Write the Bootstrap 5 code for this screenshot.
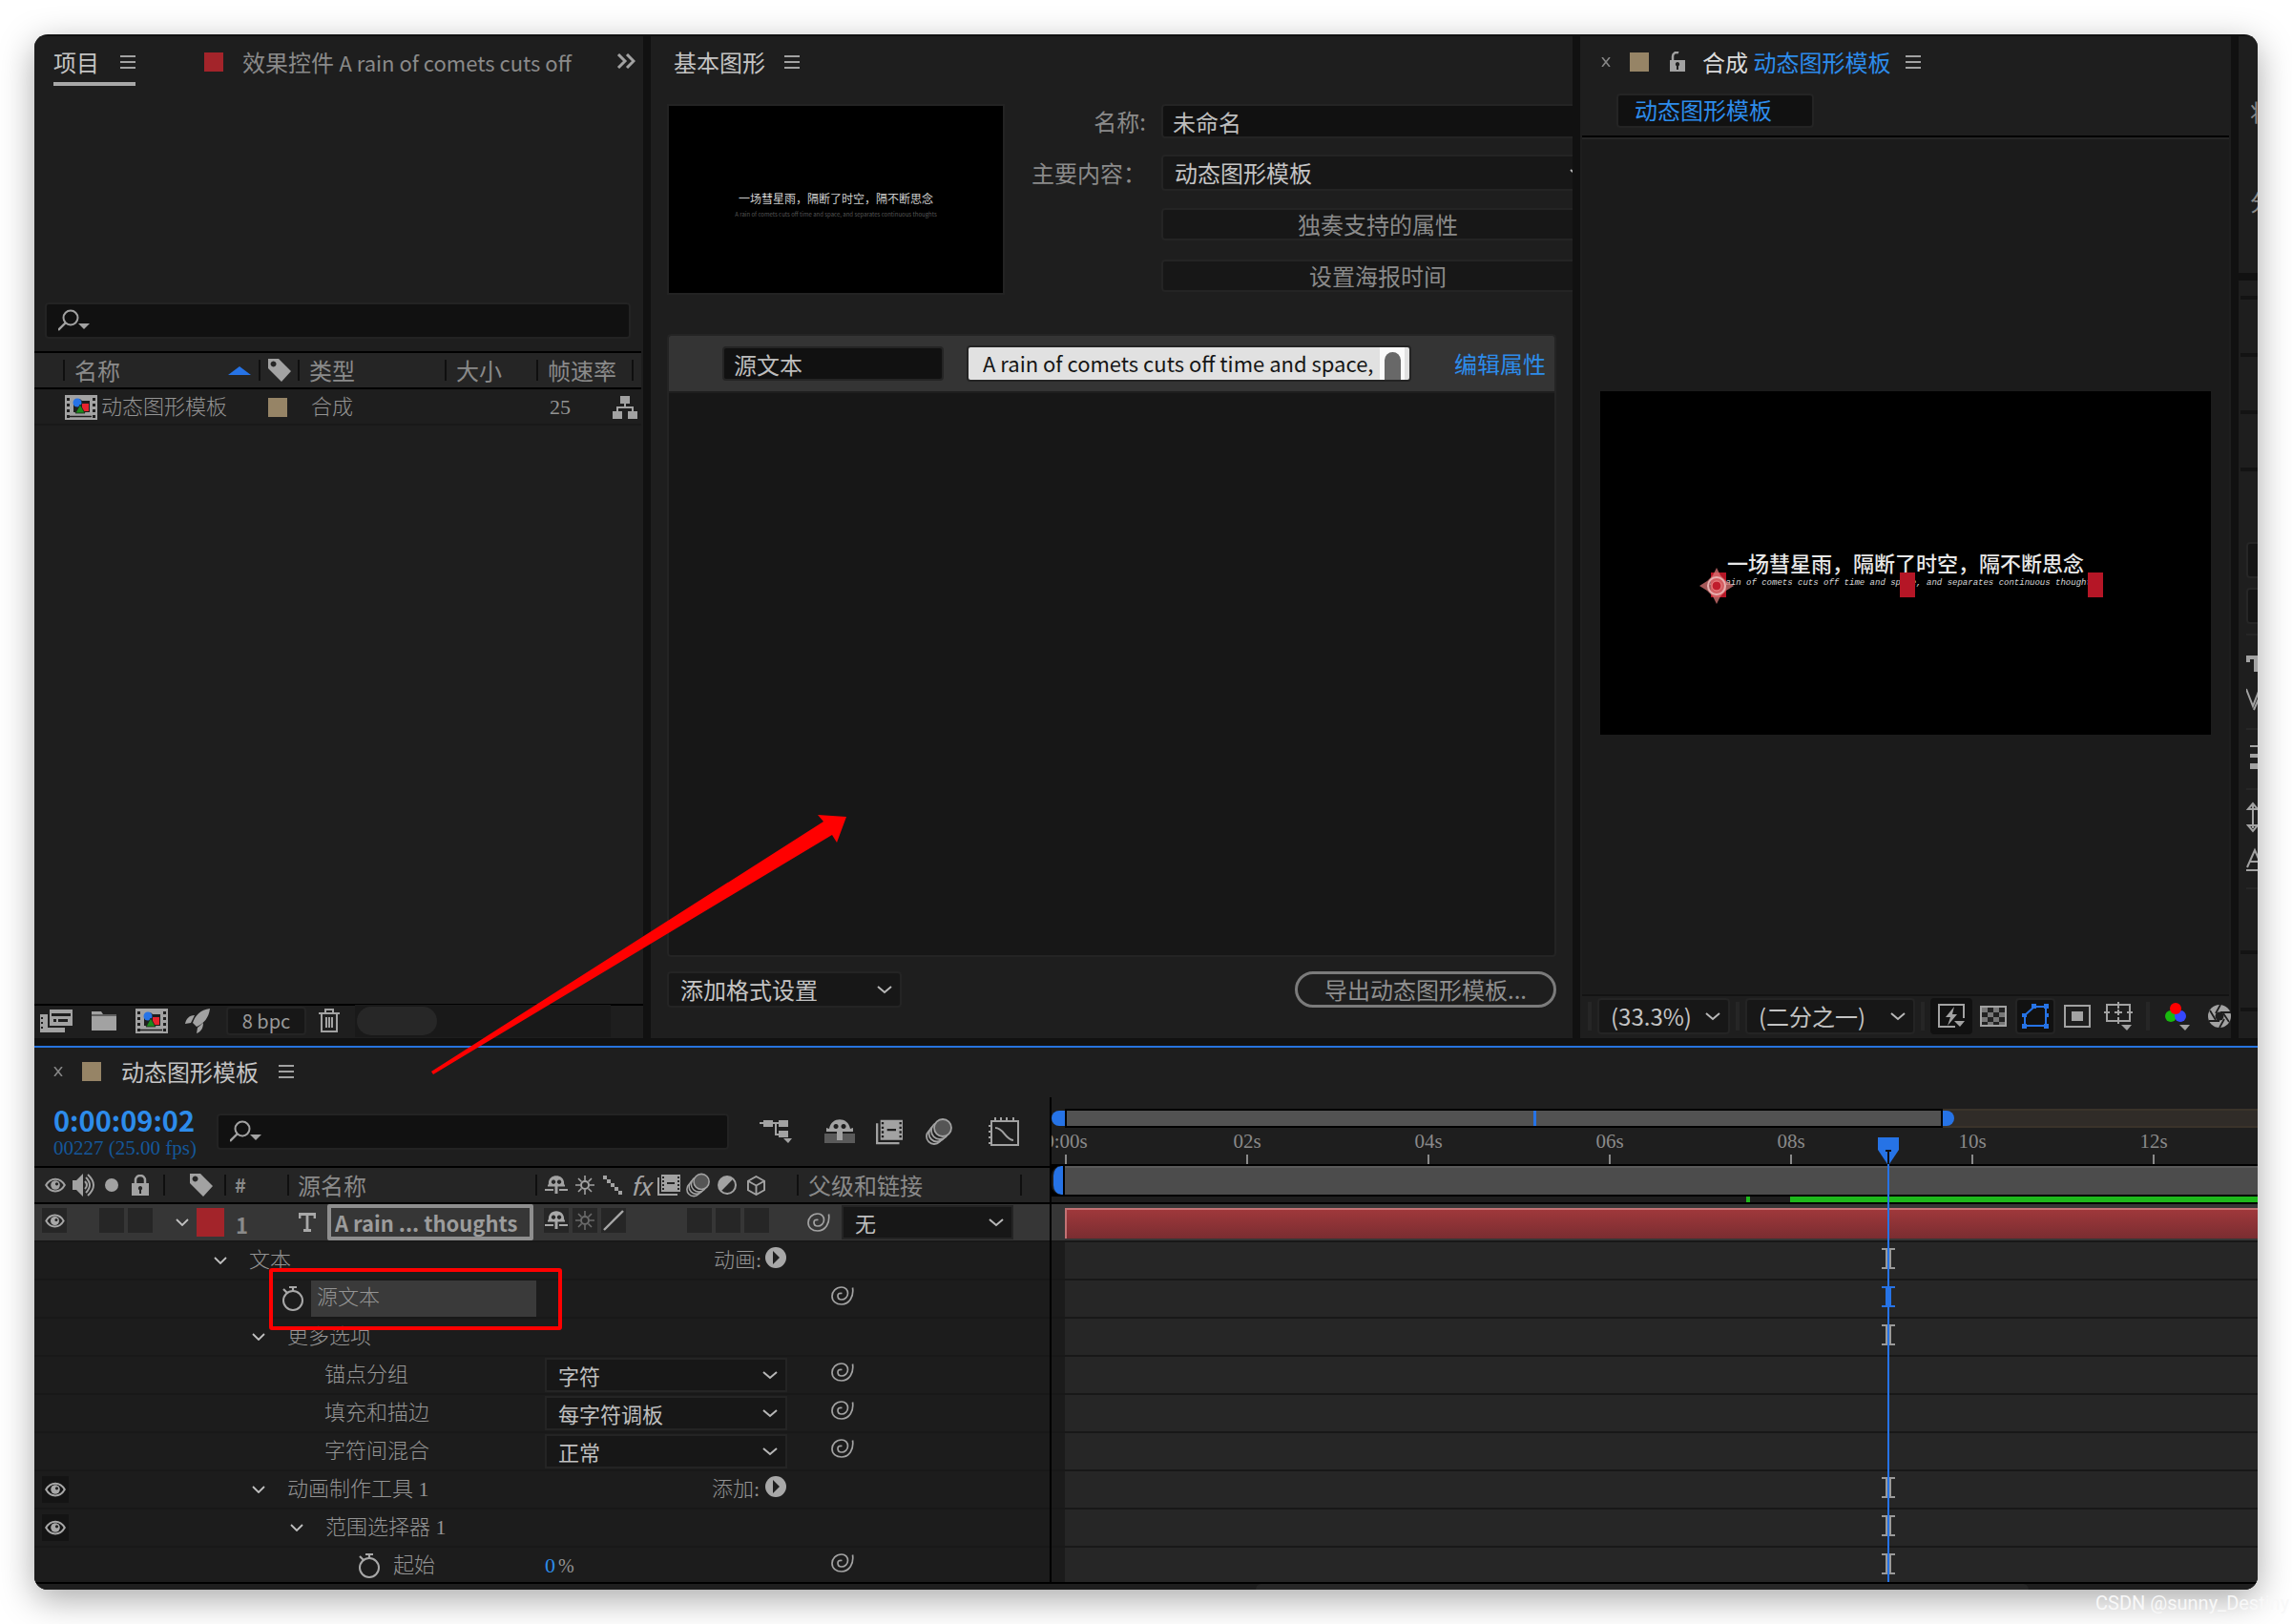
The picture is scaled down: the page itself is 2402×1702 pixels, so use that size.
<!DOCTYPE html>
<html lang="zh-CN">
<head>
<meta charset="utf-8">
<meta name="viewport" content="width=device-width, initial-scale=1">
<title>动态图形模板</title>
<link href="https://cdn.jsdelivr.net/npm/bootstrap@5.3.0/dist/css/bootstrap.min.css" rel="stylesheet">
<style>
:root{--ui:"Noto Sans CJK SC","Noto Sans",sans-serif;--thin:"Liberation Serif","Noto Sans CJK SC",serif;--blue:#2d8ceb;--ic:#a2a2a2}
body{background:#fff;font-family:var(--ui);font-size:24px;line-height:36px;color:#8a8a8a;padding:36px;height:100vh;overflow:hidden}
svg{display:block;flex:none}
.app{height:100%;background:#111;border-radius:14px;padding-top:2px;overflow:hidden;position:relative}
.shade{height:100%;border-radius:14px;box-shadow:0 10px 36px rgba(0,0,0,.34)}
.pane{background:#1e1e1e;min-width:0;overflow:hidden}
.p-proj{flex:638 1 0}.p-graph{flex:932 1 0;padding:0 17px}.p-comp{flex:682 1 0}.p-side{flex:0 0 20px}
.lat{font-size:22px}
.tabs{height:52px;padding-top:6px;flex:none;white-space:nowrap}
.tab-on{color:#c4c4c4;border-bottom:4px solid #a8a8a8;height:46px;gap:22px}
.title-txt{color:#c4c4c4}
.sw{width:20px;height:20px;flex:none}
.sw-red{background:#a3242a}.sw-tan{background:#968466}
.icb{background:none;border:0;padding:0;color:var(--ic);display:flex;flex:none}
.srch{height:38px;background:#111;border:2px solid #232323;border-radius:4px;color:var(--ic);padding-left:12px}
.srch input{background:none;border:0;outline:0;color:#ccc;flex:1;min-width:0;height:30px}
.fld{background:#111;border:2px solid #242424;border-radius:4px;color:#bdbdbd;height:36px;padding:0 10px;min-width:0;line-height:32px}
.sel{background-color:#171717;border:2px solid #242424;border-radius:4px;color:#c4c4c4;height:38px;line-height:32px;padding:0 36px 0 12px;font-size:24px;background-position:right 8px center;background-size:16px 16px;--bs-form-select-bg-img:url("data:image/svg+xml,%3csvg xmlns='http://www.w3.org/2000/svg' viewBox='0 0 16 16'%3e%3cpath fill='none' stroke='%23b8b8b8' stroke-width='2' d='m1 5 7 6 7-6'/%3e%3c/svg%3e")}
.flatbtn{background:#171717;border:2px solid #242424;border-radius:4px;color:#8a8a8a;height:34px;line-height:30px;padding:0}
.sep{background:linear-gradient(#0f0f0f,#0f0f0f) left center/2px 22px no-repeat}
/* project list */
.plist{table-layout:fixed;width:calc(100% - 2px);border-collapse:separate;border-spacing:0}
.plist th{height:40px;border-top:2px solid #000;border-bottom:2px solid #000;background-color:#252525;font-weight:400;padding:0 0 0 12px;white-space:nowrap}
.plist td{height:38px;padding:2px 0 0;border-bottom:2px solid #191919;font-family:var(--thin);font-weight:300;font-size:22px;line-height:34px;color:#949494;white-space:nowrap}
.pfoot{height:36px;border-top:2px solid #000;color:var(--ic);padding-bottom:3px}
.bpc{width:84px;height:30px;background:#171717;border:2px solid #242424;border-radius:4px;font-size:20px;line-height:26px;color:#9a9a9a;padding:0}
.scr-zone{flex:1;margin-right:34px;background:#191919;height:34px;padding-left:2px}
.pill{width:84px;height:30px;border-radius:15px;background:#272727}
/* graphics */
.thumb{width:354px;height:200px;background:#000;border:2px solid #232323;flex:none;color:#d0d0d0;font-size:12px;line-height:14px;padding-top:90px}
.thumb small{font-size:6px;line-height:8px;color:#555}
.f-lab{width:148px;text-align:right;flex:none;margin-right:16px}
.f-row{height:36px}
.proplist{border:2px solid #242424;background:#171717;border-radius:4px;overflow:hidden}
.prop-row{background:#343434;height:60px;padding-left:56px;border-bottom:2px solid #1e1e1e}
.txtarea{width:466px;height:38px;border:2px solid #242424;border-radius:4px;background:#e1e1e1;overflow:hidden}
.txtarea input{border:0;background:none;color:#161616;flex:1;min-width:0;padding:0 0 2px 15px;line-height:32px;font-size:22px}
.trk{width:26px;flex:none;background:#fafafa;height:34px;padding:5px 4px 0 5px;margin-right:5px}
.trk i{display:block;height:40px;border-radius:9px;background:#686868}
.export{border:3px solid #7b7b7b;border-radius:19px;height:38px;line-height:30px;width:274px;background:none;color:#8f8f8f;padding:0}
.lk{color:var(--blue);text-decoration:none}
/* composition */
.comp-tab{margin:8px 0 8px 38px;width:207px;height:36px;background:#111;border:2px solid #242424;border-radius:4px;padding:0 17px;line-height:30px}
.stage{background:#1b1b1b;border-top:2px solid #000;margin:0 2px;padding-bottom:6px;box-shadow:inset 0 2px #262626}
.view{width:640px;height:360px;background:#000;position:relative;flex:none}
.v-cap{position:absolute;left:0;right:0;top:47%;text-align:center;font-size:22px;line-height:20px;color:#e8e8e8;white-space:nowrap;font-family:"Noto Sans CJK SC",sans-serif;font-weight:500}
.v-sub{position:absolute;left:18%;top:54%;font:italic 9px/14px "Liberation Mono",monospace;color:#d8d8d8;white-space:nowrap}
.hnd{position:absolute;top:52.8%;width:16px;height:26px;background:#b51626}
.cfoot{height:46px;border-top:2px solid #131313;margin:0 2px;color:var(--ic);padding-bottom:2px}
.vbar{width:4px;height:30px;background:#262626;flex:none}
.tgl{background:#111;border:2px solid #111;border-radius:4px;height:38px;width:44px;justify-content:center;align-items:center}
/* side strip */
.side-t{padding-left:12px;white-space:nowrap;height:36px}
.strip-gap{height:8px;background:#111}
.ln{height:4px;background:#131313;margin-left:2px}
.ln2{height:2px;background:#262626;margin-left:8px}
.side-in{height:38px;width:60px;margin-left:8px;border:2px solid #262626;border-radius:4px;background:#151515}
/* timeline */
.tl{background:#1e1e1e;border-top:2px solid #2673dd;margin-top:8px;flex:none}
.tl-left{flex:0 0 1066px;border-right:2px solid #000}
.tc{color:var(--blue);font-size:29px;font-weight:700;line-height:34px}
.fps{color:#15579a;font:21px/26px "Liberation Serif",serif}
.th-row{height:40px;border-top:2px solid #000;border-bottom:2px solid #000;background:#252525;color:var(--ic)}
.th-row>div{height:36px;display:flex;align-items:center;color:#8a8a8a;flex:none}
.th-row svg{color:var(--ic)}
.c-av{width:135px}.c-lb{width:64px}.c-no{width:66px}.c-nm{width:260px}.c-swt{width:274px}.c-pr{width:234px}
.lay{height:38px;background:#363636}
.lay>div{display:flex;align-items:center;height:38px;flex:none}
.bx{width:26px;height:26px;background:#262626;display:flex;align-items:center;justify-content:center;flex:none;color:#a8a8a8}
.lname{width:216px;height:38px;border:4px solid #8e8e8e;color:#9c9c9c;font-weight:700;font-size:22px;line-height:30px;background:none;padding:0 0 0 4px;border-radius:2px}
.pr{height:40px;border-top:2px solid #181818;background:#1c1c1c;display:flex;position:relative;font-family:var(--thin);font-weight:300;font-size:22px;color:#949494}
.pr>div{display:flex;align-items:center;height:38px;flex:none}
.pr .sel,.lay .sel{height:36px;border-radius:0;font-size:22px;line-height:30px;font-family:var(--ui);color:#c0c0c0;font-weight:400}
.nm{width:535px}.i1{padding-left:188px}.i2{padding-left:228px}.i4{padding-left:304px}.i5{padding-left:340px}.i0{padding-left:260px}
.mid{width:254px}
.pr>.whip{padding:0 0 6px 46px}
.eyed{padding-left:8px}
.eyed .bx{background:#141414;width:28px;height:28px}
.hl{background:#3a3a3a;width:236px;height:38px;padding-left:6px}
.redbox{position:absolute;left:246px;top:-13px;width:307px;height:65px;border:4px solid #f00;border-radius:3px;z-index:3}
.pr:last-child{height:38px}
.tl-right{flex:1;min-width:0;padding-top:12px;position:relative;overflow:hidden}
.navb{height:20px}
.navb .cap{width:14px;height:16px;background:#2673e6;flex:none}
.navb .rest .cap{width:12px}
.navb .zone{width:920px;height:20px;background:#525252;border:2px solid #000;flex:none}
.navb .rest{flex:1;height:20px;background:#302c28;border:2px solid #3a332a;border-right:0;border-left:0}
.mk{width:3px;height:16px;background:#2673e6;margin-left:489px}
.ruler{height:38px;margin-left:-80px;font:21px/28px "Liberation Serif",serif;color:#8a8a8a}
.ruler span{flex:0 0 190px;text-align:center;height:38px;position:relative}
.ruler span::after{content:"";display:block;width:2px;height:10px;background:#8a8a8a;margin:0 auto}
.work{height:34px;background:#000;padding:2px 0}
.work .cap{width:14px;height:30px;background:#2673e6;border-left:2px solid #1e1e1e;border-right:2px solid #000;border-radius:10px 0 0 10px;flex:none}
.work .zone{flex:1;background:#4c4c4c;border-top:2px solid #5a5a5a}
.cache{height:8px;border-bottom:2px solid #000;padding-left:728px}
.cache i{background:#1eb81c;height:6px}
.bar-row{height:38px;background:#363636;padding:4px 0 2px 14px}
.lbar{height:32px;border-top:2px solid #c27274;border-left:2px solid #c27274;background:linear-gradient(#9f383b,#7a2d31)}
.tr{height:40px;border-top:2px solid #181818;background:linear-gradient(90deg,#1b1b1b 14px,#262626 14px)}
.tr svg{margin-left:870px;margin-top:6px;color:#9a9a9a}
.tr:last-child{height:38px}
.ph{position:absolute;left:866px;top:42px;z-index:2}
.phl{position:absolute;left:876px;top:70px;bottom:0;width:2px;background:#2673e6;z-index:2}
.tfoot{height:8px;border-top:2px solid #000;background:#1e1e1e}
.tfoot .scroll{margin-left:1280px;width:810px;height:6px;background:#272727;border-radius:8px 8px 0 0}
.arrow{position:absolute;left:410px;top:810px;z-index:4;pointer-events:none}
.wm{position:absolute;right:-24px;top:100%;color:#f8f8f8;font:20px/28px Roboto,sans-serif;width:194px;white-space:nowrap}
</style>
<script src="https://cdn.jsdelivr.net/npm/bootstrap@5.3.0/dist/js/bootstrap.bundle.min.js"></script>
</head>
<body>
<svg width="0" height="0" class="position-absolute">
<defs>
<symbol id="menu" viewBox="0 0 16 14"><path d="M0 1h16M0 7h16M0 13h16" stroke="currentColor" stroke-width="2"/></symbol>
<symbol id="find" viewBox="0 0 34 24"><circle cx="13" cy="9" r="7.5" fill="none" stroke="currentColor" stroke-width="2"/><path d="M8 14 0 22" stroke="currentColor" stroke-width="2.4"/><path d="M21 15h12l-6 6z" fill="currentColor"/></symbol>
<symbol id="tag" viewBox="0 0 24 24"><path fill="currentColor" fill-rule="evenodd" d="M0 0h11l13 13-10 11L0 10zM5.500 2.500a3 3 0 1 0 .1 0z"/></symbol>
<symbol id="clip" viewBox="0 0 34 26"><path fill="currentColor" fill-rule="evenodd" d="M0 0h34v26H0zM2 3v3h3V3zm0 6v3h3V9zm0 6v3h3v-3zm0 6v3h3v-3zM29 3v3h3V3zm0 6v3h3V9zm0 6v3h3v-3zm0 6v3h3v-3z"/><path d="M9 9a5 5 0 0 1 9-3h8v12H9z" fill="#1e1e1e"/><circle cx="13" cy="8" r="4.500" fill="#2673e6"/><path d="M18 9h7v8h-7z" fill="#e8232e"/><path d="m16 10 5 9H11z" fill="#1c8a1c" stroke="#1e1e1e" stroke-width=".8"/><path d="M5 22.500h23" stroke="#1e1e1e" stroke-width="1.500"/></symbol>
<symbol id="net" viewBox="0 0 26 24"><path fill="currentColor" d="M8 0h10v8H8zM0 16h10v8H0zM16 16h10v8H16z"/><path d="M13 8v5M5 17v-5h16v5" fill="none" stroke="currentColor" stroke-width="2"/></symbol>
<symbol id="eye" viewBox="0 0 22 16"><path fill="none" stroke="currentColor" stroke-width="2" d="M1.200 8C6-.5 16-.5 20.800 8 16 16.500 6 16.500 1.200 8z"/><circle cx="11" cy="8" r="4.800" fill="currentColor"/><circle cx="12.500" cy="6.800" r="1.600" fill="#222"/></symbol>
<symbol id="spk" viewBox="0 0 24 24"><path fill="currentColor" d="M0 7h4l7-7v24l-7-7H0z"/><path d="M13 8q4 4 0 8M14 4q8 8 0 16M16 1q12 11 0 22" fill="none" stroke="currentColor" stroke-width="2"/></symbol>
<symbol id="lock" viewBox="0 0 18 22"><path d="M4 10V6a5 5 0 0 1 10 0v4" fill="none" stroke="currentColor" stroke-width="2.500"/><path fill="currentColor" fill-rule="evenodd" d="M0 9h18v13H0zm9 3a2.300 2.300 0 0 0-1 4.300V20h2v-3.700A2.300 2.300 0 0 0 9 12z"/></symbol>
<symbol id="unlock" viewBox="0 0 18 22"><path d="M4 10V5a4 4 0 0 1 6-3.500" fill="none" stroke="currentColor" stroke-width="2.500"/><path fill="currentColor" fill-rule="evenodd" d="M1 9h16v12H1zm8 2a2.300 2.300 0 0 0-1 4.300V19h2v-3.700A2.300 2.300 0 0 0 9 11z"/></symbol>
<symbol id="shy" viewBox="0 0 24 20"><path fill="currentColor" fill-rule="evenodd" d="M4 10C2-3 22-3 20 10zM9 4.500a2.200 2.200 0 1 0 .1 0zm6 0a2.200 2.200 0 1 0 .1 0z"/><path d="M10.500 9h3v10h-3z" fill="currentColor"/><path d="M0 15h9M15 15h9M3 10.500h18" stroke="currentColor" stroke-width="2"/></symbol>
<symbol id="sun" viewBox="0 0 20 20"><circle cx="10" cy="10" r="4" fill="none" stroke="currentColor" stroke-width="2"/><path d="M10 0v5M10 15v5M0 10h5M15 10h5M3 3l3.500 3.500M13.500 13.500 17 17M17 3l-3.500 3.500M6.500 13.500 3 17" stroke="currentColor" stroke-width="1.600"/></symbol>
<symbol id="stair" viewBox="0 0 20 20"><path fill="currentColor" d="M0 0h4v4H0zM4 4h4v4H4zM8 8h4v4H8zM12 12h4v4h-4zM16 16h4v4h-4z"/></symbol>
<symbol id="film" viewBox="0 0 24 22"><path fill="currentColor" fill-rule="evenodd" d="M4 0h20v18H4zM5 2v2h2V2zm0 4v2h2V6zm0 4v2h2v-2zm0 4v2h2v-2zM21 2v2h2V2zm0 4v2h2V6zm0 4v2h2v-2zm0 4v2h2v-2zM10 8v2h8V8z"/><path d="M1 3v18h20" fill="none" stroke="currentColor" stroke-width="2"/></symbol>
<symbol id="mb" viewBox="0 0 28 28"><g stroke="currentColor" stroke-width="1.800"><circle cx="9" cy="19" r="8" fill="none"/><circle cx="12" cy="16" r="8.500" fill="#1e1e1e"/><circle cx="15" cy="13" r="9" fill="#1e1e1e"/><circle cx="18" cy="10" r="9" fill="#555"/></g></symbol>
<symbol id="half" viewBox="0 0 20 20"><circle cx="10" cy="10" r="9" fill="none" stroke="currentColor" stroke-width="2"/><path d="M16.400 3.600A9 9 0 0 0 3.600 16.400z" fill="currentColor"/></symbol>
<symbol id="cube" viewBox="0 0 20 22"><path d="m10 1 9 5v10l-9 5-9-5V6zM1 6l9 5 9-5M10 11v10" fill="none" stroke="currentColor" stroke-width="2"/></symbol>
<symbol id="whip" viewBox="0 0 24 20"><path d="M22.500 1.500C24 11 19 19 11 19 5 19 1 15.500 1 10.500S5 1 11 1c4 0 6.500 3 6.500 6.500S14.500 14 11 14c-3 0-4-2-4-4s1.500-3 4.500-2.500" fill="none" stroke="currentColor" stroke-width="1.700"/></symbol>
<symbol id="chev" viewBox="0 0 14 8"><path d="m1 1 6 6 6-6" fill="none" stroke="#c0c0c0" stroke-width="1.800"/></symbol>
<symbol id="watch" viewBox="0 0 22 26"><circle cx="11" cy="15" r="10" fill="none" stroke="currentColor" stroke-width="2"/><path d="M7 1h8M11 1v4M1 3l4 4" stroke="currentColor" stroke-width="2.200"/></symbol>
<symbol id="play" viewBox="0 0 22 22"><circle cx="11" cy="11" r="11" fill="currentColor"/><path d="m8 4 7 7-7 7z" fill="#1e1e1e"/></symbol>
<symbol id="beam" viewBox="0 0 14 22"><path d="M0 1h14M0 21h14M5 1v20M9 1v20" stroke="currentColor" stroke-width="2"/></symbol>
<symbol id="cross" viewBox="0 0 10 10"><path d="m1 0 8 10M9 0 1 10" stroke="#858585" stroke-width="1.600"/></symbol>
</defs>
</svg>

<div class="shade position-relative">
<main class="app d-flex flex-column">
  <div class="d-flex flex-grow-1 gap-2" style="min-height:0">

    <section class="pane p-proj d-flex flex-column">
      <div class="tabs d-flex">
        <div class="tab-on d-flex align-items-center" style="margin-left:20px"><span>项目</span><button class="icb" aria-label="面板菜单"><svg width="16" height="14"><use href="#menu"/></svg></button></div>
        <div class="d-flex align-items-center" style="margin-left:72px;height:42px"><span class="sw sw-red"></span><span style="margin-left:20px">效果控件 <span class="lat">A rain of comets cuts off</span></span></div>
        <button class="icb ms-auto align-items-center me-2" style="height:40px" aria-label="更多"><svg width="20" height="16" viewBox="0 0 20 16"><path d="m2 1 7 7-7 7M11 1l7 7-7 7" fill="none" stroke="currentColor" stroke-width="3"/></svg></button>
      </div>
      <label class="srch d-flex align-items-center" style="margin:227px 13px 13px 11px"><svg width="34" height="24"><use href="#find"/></svg><input type="text" aria-label="搜索项目"></label>
      <table class="plist">
        <colgroup><col style="width:30px"><col><col style="width:41px"><col style="width:154px"><col style="width:96px"><col style="width:100px"><col style="width:10px"></colgroup>
        <thead><tr><th></th><th class="sep"><span class="d-flex align-items-center justify-content-between pe-2">名称<svg width="24" height="9" viewBox="0 0 24 9"><path d="M12 0 24 9H0z" fill="#2673e6"/></svg></span></th><th class="sep" style="padding-left:10px"><svg width="24" height="24" color="#a2a2a2"><use href="#tag"/></svg></th><th class="sep">类型</th><th class="sep">大小</th><th class="sep">帧速率</th><th class="sep"></th></tr></thead>
        <tbody><tr><td></td><td><span class="d-flex align-items-center gap-1"><svg width="34" height="26" color="#a2a2a2" style="margin-left:2px"><use href="#clip"/></svg>动态图形模板</span></td><td><span class="sw sw-tan d-block" style="margin-left:10px"></span></td><td style="padding-left:14px">合成</td><td></td><td colspan="2"><span class="d-flex justify-content-between align-items-center pe-1" style="padding-left:14px">25<svg width="26" height="24" color="#a2a2a2"><use href="#net"/></svg></span></td></tr></tbody>
      </table>
      <div class="flex-grow-1"></div>
      <div class="pfoot d-flex align-items-center" style="padding-left:6px">
        <button class="icb" aria-label="解释素材"><svg width="34" height="24" viewBox="0 0 34 24"><path fill="currentColor" fill-rule="evenodd" d="M10 0h24v17H10zM12 4v3h20V4zm2 6v3h3v-3zm5 0v3h10v-3z"/><path fill="currentColor" fill-rule="evenodd" d="M0 5h8v14h18v5H0zm1 3v2h2V8zm0 5v2h2v-2zm0 5v2h2v-2z"/></svg></button>
        <button class="icb" style="margin-left:20px" aria-label="新建文件夹"><svg width="26" height="20" viewBox="0 0 26 20"><path fill="currentColor" d="M0 0h10l2 3h14v17H0z"/><path d="M0 4h26" stroke="#1e1e1e"/></svg></button>
        <button class="icb" style="margin-left:20px" aria-label="新建合成"><svg width="34" height="26"><use href="#clip"/></svg></button>
        <button class="icb" style="margin-left:18px" aria-label="项目设置"><svg width="26" height="26" viewBox="0 0 26 26"><path fill="currentColor" d="M26 0C16 1 10 8 8 15l4 4C19 16 25 10 26 0zM10 7C4 7 1 11 0 16l6-1zM19 15l-6 5-1 6c5-2 7-6 7-11z"/></svg></button>
        <button class="bpc" style="margin-left:17px">8 bpc</button>
        <button class="icb" style="margin:0 16px 0 13px" aria-label="删除"><svg width="22" height="26" viewBox="0 0 22 26"><path d="M0 5h22M7 5V1h8v4M3 5v19h16V5M8 9v11M11 9v11M14 9v11" fill="none" stroke="currentColor" stroke-width="2"/></svg></button>
        <div class="scr-zone d-flex align-items-center"><div class="pill"></div></div>
      </div>
    </section>

    <section class="pane p-graph d-flex flex-column">
      <div class="tabs d-flex align-items-center pb-1" style="gap:20px;padding-left:7px"><span class="title-txt">基本图形</span><button class="icb" aria-label="面板菜单"><svg width="16" height="14"><use href="#menu"/></svg></button></div>
      <div class="d-flex" style="margin-top:19px">
        <div class="thumb text-center">一场彗星雨，隔断了时空，隔不断思念<br><small>A rain of comets cuts off time and space, and separates continuous thoughts</small></div>
        <div class="flex-grow-1 d-flex flex-column" style="gap:18px;margin-right:-40px">
          <div class="f-row d-flex align-items-center"><label class="f-lab" for="nm">名称:</label><input id="nm" class="fld flex-grow-1" value="未命名"></div>
          <div class="f-row d-flex align-items-center"><label class="f-lab" for="mc">主要内容：</label><select id="mc" class="form-select sel flex-grow-1"><option>动态图形模板</option></select></div>
          <div class="f-row d-flex align-items-center"><span class="f-lab"></span><button class="flatbtn flex-grow-1">独奏支持的属性</button></div>
          <div class="f-row d-flex align-items-center"><span class="f-lab"></span><button class="flatbtn flex-grow-1">设置海报时间</button></div>
        </div>
      </div>
      <div class="proplist flex-grow-1" style="margin-top:41px">
        <div class="prop-row d-flex align-items-center"><input class="fld" style="width:232px" value="源文本" aria-label="属性名称">
          <div class="txtarea d-flex" style="margin-left:24px"><input value="A rain of comets cuts off time and space," aria-label="源文本内容"><span class="trk"><i></i></span></div>
          <a class="lk ms-auto" href="#" style="margin-right:9px">编辑属性</a></div>
      </div>
      <div class="d-flex justify-content-between" style="margin:15px 0 32px"><select class="form-select sel" style="width:246px" aria-label="格式设置"><option>添加格式设置</option></select><button class="export">导出动态图形模板...</button></div>
    </section>

    <section class="pane p-comp d-flex flex-column">
      <div class="tabs d-flex align-items-center pb-1" style="padding-left:22px"><svg width="10" height="10"><use href="#cross"/></svg><span class="sw sw-tan" style="margin:0 21px 0 20px"></span><svg width="18" height="22" color="#a2a2a2" style="margin-right:17px"><use href="#unlock"/></svg><span style="color:#dcdcdc">合成</span>&nbsp;<span class="lk">动态图形模板</span><button class="icb" style="margin-left:16px" aria-label="面板菜单"><svg width="16" height="14"><use href="#menu"/></svg></button></div>
      <div class="comp-tab"><a class="lk" href="#">动态图形模板</a></div>
      <div class="stage flex-grow-1 d-flex align-items-center justify-content-center">
        <div class="view"><div class="v-cap">一场彗星雨，隔断了时空，隔不断思念</div><div class="v-sub">A rain of comets cuts off time and space, and separates continuous thoughts</div>
          <span class="hnd" style="left:18.200%"></span><span class="hnd" style="left:49%"></span><span class="hnd" style="left:79.800%"></span>
          <svg class="position-absolute" style="left:16.200%;top:51.300%" width="36" height="38" viewBox="0 0 36 38"><path d="m18 0 4 8 6 6 8 5-8 5-6 6-4 8-4-8-6-6-8-5 8-5 6-6z" fill="#d77" opacity=".75"/><circle cx="18" cy="19" r="9" fill="none" stroke="#e8b0b0" stroke-width="2"/><circle cx="18" cy="19" r="5" fill="#c01c2c" stroke="#e88" stroke-width="1"/></svg>
        </div>
      </div>
      <div class="cfoot d-flex align-items-center">
        <span class="vbar" style="margin:0 6px"></span><select class="form-select sel lat" style="width:139px;flex:none" aria-label="缩放"><option>(33.3%)</option></select>
        <span class="vbar" style="margin:0 6px"></span><select class="form-select sel" style="width:178px;flex:none" aria-label="分辨率"><option>(二分之一)</option></select>
        <span class="vbar" style="margin:0 6px"></span>
        <button class="icb tgl" aria-label="快速预览"><svg width="28" height="26" viewBox="0 0 28 26"><path d="M18 24H1V1h26v14" fill="none" stroke="currentColor" stroke-width="2"/><path fill="currentColor" d="M17 3 8 14h5l-3 9 10-12h-5zM17 18h11l-5 6z"/></svg></button>
        <button class="icb" style="margin:0 9px 0 8px" aria-label="透明网格"><svg width="28" height="22" viewBox="0 0 28 22"><path d="M1 1h26v20H1z" fill="#222" stroke="currentColor" stroke-width="2"/><path fill="#777" d="M2 2h6v5H2zM14 2h6v5h-6zM8 7h6v5H8zM20 7h6v5h-6zM2 12h6v5H2zM14 12h6v5h-6zM8 17h6v3H8zM20 17h6v3h-6z"/></svg></button>
        <button class="icb tgl" style="width:42px;border-color:#242424;color:#2673e6" aria-label="蒙版路径"><svg width="28" height="26" viewBox="0 0 28 26"><path d="M3 23V12L13 3h12v20z" fill="none" stroke="currentColor" stroke-width="2"/><path fill="currentColor" d="M0 21h5v5H0zM23 21h5v5h-5zM23 0h5v5h-5zM10 0h5v5h-5zM0 10h5v4H0zM24 10h4v4h-4z"/></svg></button>
        <button class="icb" style="margin:0 14px 0 9px" aria-label="感兴趣区域"><svg width="28" height="24" viewBox="0 0 28 24"><path d="M1 1h26v22H1z" fill="none" stroke="currentColor" stroke-width="2"/><path fill="currentColor" d="M8 7h12v10H8z"/></svg></button>
        <button class="icb" aria-label="网格和参考线"><svg width="30" height="30" viewBox="0 0 30 30"><path d="M3 3h24v17H3z" fill="none" stroke="currentColor" stroke-width="2"/><path d="M15 0v7M15 16v7M0 11h6M24 11h6M11 11h8M15 8v6" stroke="currentColor" stroke-width="2"/><path fill="currentColor" d="M18 24h11l-5 6z"/></svg></button>
        <span class="vbar" style="margin:0 16px 0 14px"></span>
        <button class="icb" aria-label="显示通道"><svg width="28" height="30" viewBox="0 0 28 30"><circle cx="6" cy="15" r="6" fill="#19b80e"/><circle cx="16" cy="15" r="6" fill="#3548ff"/><circle cx="11" cy="7" r="6" fill="#f00"/><path fill="currentColor" d="M15 24h11l-5 6z"/></svg></button>
        <button class="icb" style="margin-left:17px" aria-label="曝光度"><svg width="24" height="24" viewBox="0 0 24 24"><circle cx="12" cy="12" r="12" fill="currentColor"/><path d="m13 0-5 9M24 8H13M22 18l-6-9M12 24l5-9M1 17h11M2 6l6 10" stroke="#1e1e1e" stroke-width="1.800"/><circle cx="12" cy="12" r="4.500" fill="#1e1e1e"/></svg></button>
      </div>
    </section>

    <section class="pane p-side">
      <div class="side-t" style="margin-top:61px">将图层对齐到:</div>
      <div class="side-t" style="margin:58px 0">分布图层:</div>
      <div class="strip-gap" style="margin-top:-1px"></div>
      <div class="ln" style="margin-top:16px"></div><div class="ln" style="margin-top:56px"></div><div class="ln" style="margin-top:56px"></div><div class="ln" style="margin-top:56px"></div>
      <div class="side-in" style="margin-top:74px"></div><div class="side-in" style="margin-top:10px"></div>
      <div class="ln2" style="margin-top:10px"></div>
      <svg width="40" height="262" viewBox="0 0 40 262" color="#a2a2a2" style="margin-left:8px"><g stroke="currentColor" fill="none" stroke-width="2"><path d="M0 23h20M2 22v6M10 23v15" stroke-width="4"/><path d="M0 56l7 18 7-18M8 78 20 50"/><path d="M4 116h30" /><path d="M4 126h30" stroke-width="4"/><path d="M4 137h30" stroke-width="6"/><path d="M7 178v24M2 182l5-6 5 6zM2 199l5 6 5-6z"/><path d="m1 243 8-18 8 18M4 237h10M0 246h24"/></g><path d="M0 98h40M0 161h40" stroke="#262626" stroke-width="2"/></svg>
      <div class="ln2" style="margin-top:2px"></div><div class="ln" style="margin-top:64px"></div><div class="ln" style="margin-top:56px"></div>
    </section>
  </div>

  <section class="tl">
    <div class="d-flex align-items-center" style="height:52px;padding:0 0 2px 20px"><svg width="10" height="10"><use href="#cross"/></svg><span class="sw sw-tan" style="margin:0 21px 0 20px"></span><span class="title-txt">动态图形模板</span><button class="icb" style="margin-left:21px" aria-label="面板菜单"><svg width="16" height="14"><use href="#menu"/></svg></button></div>
    <div class="d-flex">
      <div class="tl-left">
        <div class="d-flex align-items-center" style="height:72px;padding:0 32px 0 20px;color:#a2a2a2">
          <div style="width:171px;white-space:nowrap"><div class="tc">0:00:09:02</div><div class="fps">00227 (25.00 fps)</div></div>
          <label class="srch d-flex align-items-center" style="width:537px"><svg width="34" height="24"><use href="#find"/></svg><input type="text" aria-label="搜索图层"></label>
          <button class="icb" style="margin-left:32px" aria-label="合成微型流程图"><svg width="34" height="26" viewBox="0 0 34 26"><path fill="currentColor" d="M4 1h10v7H4zM20 1h10v7H20zM20 12h10v7H20zM25 20h9l-4 5z"/><path d="M0 4h22M17 4v12h5" fill="none" stroke="currentColor" stroke-width="2"/></svg></button>
          <button class="icb" style="margin-left:34px" aria-label="隐藏图层"><svg width="32" height="26" viewBox="0 0 32 26"><path d="M0 15h32v10H0z" fill="#5a5a5a"/><path fill="currentColor" fill-rule="evenodd" d="M2 13V9l3 1C7-3 25-3 27 10l3-1v4zM12 5a2.500 2.500 0 1 0 .1 0zm8 0a2.500 2.500 0 1 0 .1 0z"/><path fill="currentColor" d="M13 11h6v11h-6z"/></svg></button>
          <button class="icb" style="margin-left:22px" aria-label="帧混合"><svg width="28" height="27"><use href="#film"/></svg></button>
          <button class="icb" style="margin-left:24px" aria-label="运动模糊"><svg width="28" height="28"><use href="#mb"/></svg></button>
          <button class="icb ms-auto" aria-label="图表编辑器"><svg width="32" height="30" viewBox="0 0 32 30"><path d="M3 4h28v25H3zM7 0v4M13 0v4M19 0v4M26 0v4M0 9h3M0 15h3M0 21h3M0 27h3" fill="none" stroke="currentColor" stroke-width="2"/><path d="M7 11c9 0 10 12 19 13" fill="none" stroke="currentColor" stroke-width="2"/></svg></button>
        </div>
        <div class="th-row d-flex">
          <div class="c-av" style="padding-left:11px"><svg width="22" height="16"><use href="#eye"/></svg><svg width="24" height="24" style="margin-left:7px"><use href="#spk"/></svg><svg width="14" height="14" style="margin:0 14px 0 10px"><circle cx="7" cy="7" r="7" fill="currentColor"/></svg><svg width="18" height="22"><use href="#lock"/></svg></div>
          <div class="c-lb sep" style="padding-left:28px"><svg width="24" height="24"><use href="#tag"/></svg></div>
          <div class="c-no sep" style="padding-left:11px;font-size:20px;font-weight:700">#</div>
          <div class="c-nm sep" style="padding-left:11px">源名称</div>
          <div class="c-swt sep" style="padding-left:10px"><svg width="24" height="20"><use href="#shy"/></svg><svg width="20" height="20" class="ms-2"><use href="#sun"/></svg><svg width="20" height="20" style="margin:0 9px"><use href="#stair"/></svg><i style="color:#a2a2a2;font:italic 26px/30px 'Noto Sans CJK SC',sans-serif;width:24px">fx</i><svg width="24" height="22" style="margin:0 6px 0 4px"><use href="#film"/></svg><svg width="25" height="26"><use href="#mb"/></svg><svg width="20" height="20" style="margin:0 11px 0 8px"><use href="#half"/></svg><svg width="19" height="21"><use href="#cube"/></svg></div>
          <div class="c-pr sep" style="padding-left:12px">父级和链接</div><div class="sep" style="width:30px"></div>
        </div>
        <div class="lay d-flex">
          <div class="c-av" style="padding:0 11px 4px 8px"><span class="bx"><svg width="21" height="15"><use href="#eye"/></svg></span><span class="bx ms-auto"></span><span class="bx ms-1"></span></div>
          <div class="c-lb" style="padding-left:13px"><svg width="14" height="8"><use href="#chev"/></svg><span class="sw-red" style="width:30px;height:30px;margin-left:8px"></span></div>
          <div class="c-no" style="padding:4px 0 0 12px;font-weight:700;font-size:22px">1</div>
          <div style="width:269px"><svg width="18" height="20" viewBox="0 0 18 20" style="margin:0 12px 0 12px"><path d="M1 6V1.500h16V6M9 1v17M5 18.500h8" fill="none" stroke="#a8a8a8" stroke-width="2.800"/></svg><input class="lname" value="A rain ... thoughts" aria-label="图层名称"></div>
          <div class="gap-1" style="width:276px;padding-bottom:4px"><span class="bx"><svg width="24" height="20"><use href="#shy"/></svg></span><span class="bx" style="color:#6a6a6a"><svg width="20" height="20"><use href="#sun"/></svg></span><span class="bx"><svg width="24" height="24" viewBox="0 0 24 24"><path d="M2 22 22 2" stroke="currentColor" stroke-width="2.400"/></svg></span><span style="width:56px"></span><span class="bx"></span><span class="bx"></span><span class="bx"></span></div>
          <div><svg width="24" height="20" color="#a2a2a2" style="margin-right:12px"><use href="#whip"/></svg><select class="form-select sel" style="width:180px" aria-label="父级"><option>无</option></select></div>
        </div>
        <div class="pr"><div class="nm i1"><svg width="14" height="8"><use href="#chev"/></svg><span style="margin-left:23px">文本</span></div><div class="mid justify-content-end">动画:<svg width="22" height="22" color="#a8a8a8" style="margin:0 1px 6px 4px"><use href="#play"/></svg></div></div>
        <div class="pr"><div class="nm i0"><svg width="22" height="26" color="#a8a8a8" style="margin-right:8px"><use href="#watch"/></svg><span class="hl">源文本</span></div><div class="mid"></div><div class="whip"><svg width="24" height="20" color="#a2a2a2"><use href="#whip"/></svg></div><span class="redbox"></span></div>
        <div class="pr"><div class="nm i2"><svg width="14" height="8"><use href="#chev"/></svg><span style="margin-left:23px">更多选项</span></div></div>
        <div class="pr"><div class="nm i4"><label for="s1">锚点分组</label></div><div class="mid"><select id="s1" class="form-select sel"><option>字符</option></select></div><div class="whip"><svg width="24" height="20" color="#a2a2a2"><use href="#whip"/></svg></div></div>
        <div class="pr"><div class="nm i4"><label for="s2">填充和描边</label></div><div class="mid"><select id="s2" class="form-select sel"><option>每字符调板</option></select></div><div class="whip"><svg width="24" height="20" color="#a2a2a2"><use href="#whip"/></svg></div></div>
        <div class="pr"><div class="nm i4"><label for="s3">字符间混合</label></div><div class="mid"><select id="s3" class="form-select sel"><option>正常</option></select></div><div class="whip"><svg width="24" height="20" color="#a2a2a2"><use href="#whip"/></svg></div></div>
        <div class="pr"><div class="nm eyed"><span class="bx"><svg width="22" height="16"><use href="#eye"/></svg></span><svg width="14" height="8" style="margin-left:192px"><use href="#chev"/></svg><span style="margin-left:23px">动画制作工具 1</span></div><div class="mid justify-content-end">添加:<svg width="22" height="22" color="#a8a8a8" style="margin:0 1px 6px 6px"><use href="#play"/></svg></div></div>
        <div class="pr"><div class="nm eyed"><span class="bx"><svg width="22" height="16"><use href="#eye"/></svg></span><svg width="14" height="8" style="margin-left:232px"><use href="#chev"/></svg><span style="margin-left:23px">范围选择器 1</span></div></div>
        <div class="pr"><div class="nm i5"><svg width="22" height="26" color="#a8a8a8" style="margin-right:14px"><use href="#watch"/></svg>起始</div><div class="mid"><span class="lk">0</span><span style="margin-left:3px;font-size:20px">%</span></div><div class="whip"><svg width="24" height="20" color="#a2a2a2"><use href="#whip"/></svg></div></div>
      </div>

      <div class="tl-right">
        <div class="navb d-flex align-items-center"><span class="cap" style="border-radius:10px 0 0 10px"></span><div class="zone"><div class="mk"></div></div><div class="rest d-flex"><span class="cap" style="border-radius:0 10px 10px 0"></span></div></div>
        <div class="ruler d-flex"><span>0:00s</span><span>02s</span><span>04s</span><span>06s</span><span>08s</span><span>10s</span><span>12s</span></div>
        <div class="work d-flex"><span class="cap"></span><div class="zone"></div></div>
        <div class="cache d-flex"><i style="width:4px"></i><i class="flex-grow-1" style="margin-left:42px"></i></div>
        <div class="bar-row"><div class="lbar"></div></div>
        <div>
        <div class="tr"><svg width="14" height="22"><use href="#beam"/></svg></div>
        <div class="tr"><svg width="14" height="22" style="color:#2673e6"><use href="#beam"/></svg></div>
        <div class="tr"><svg width="14" height="22"><use href="#beam"/></svg></div>
        <div class="tr"></div><div class="tr"></div><div class="tr"></div>
        <div class="tr"><svg width="14" height="22"><use href="#beam"/></svg></div>
        <div class="tr"><svg width="14" height="22"><use href="#beam"/></svg></div>
        <div class="tr"><svg width="14" height="22"><use href="#beam"/></svg></div>
        </div>
        <svg class="ph" width="22" height="28" viewBox="0 0 22 28"><path d="M0 0h22v13L12 28h-2L0 13z" fill="#2673e6"/><path d="M8 14h6M11 14v14" stroke="#111" stroke-width="2"/></svg>
        <div class="phl"></div>
      </div>
    </div>
    <div class="tfoot"><div class="scroll"></div></div>
  </section>
  <svg class="arrow" width="450" height="290" viewBox="410 810 450 290"><path d="M416 1087 827 825l-6-7 30 2-10 27-5-8L418 1090z" fill="#f00"/></svg>
</main>
<div class="wm">CSDN @sunny_Destiny</div>
</div>
</body>
</html>
